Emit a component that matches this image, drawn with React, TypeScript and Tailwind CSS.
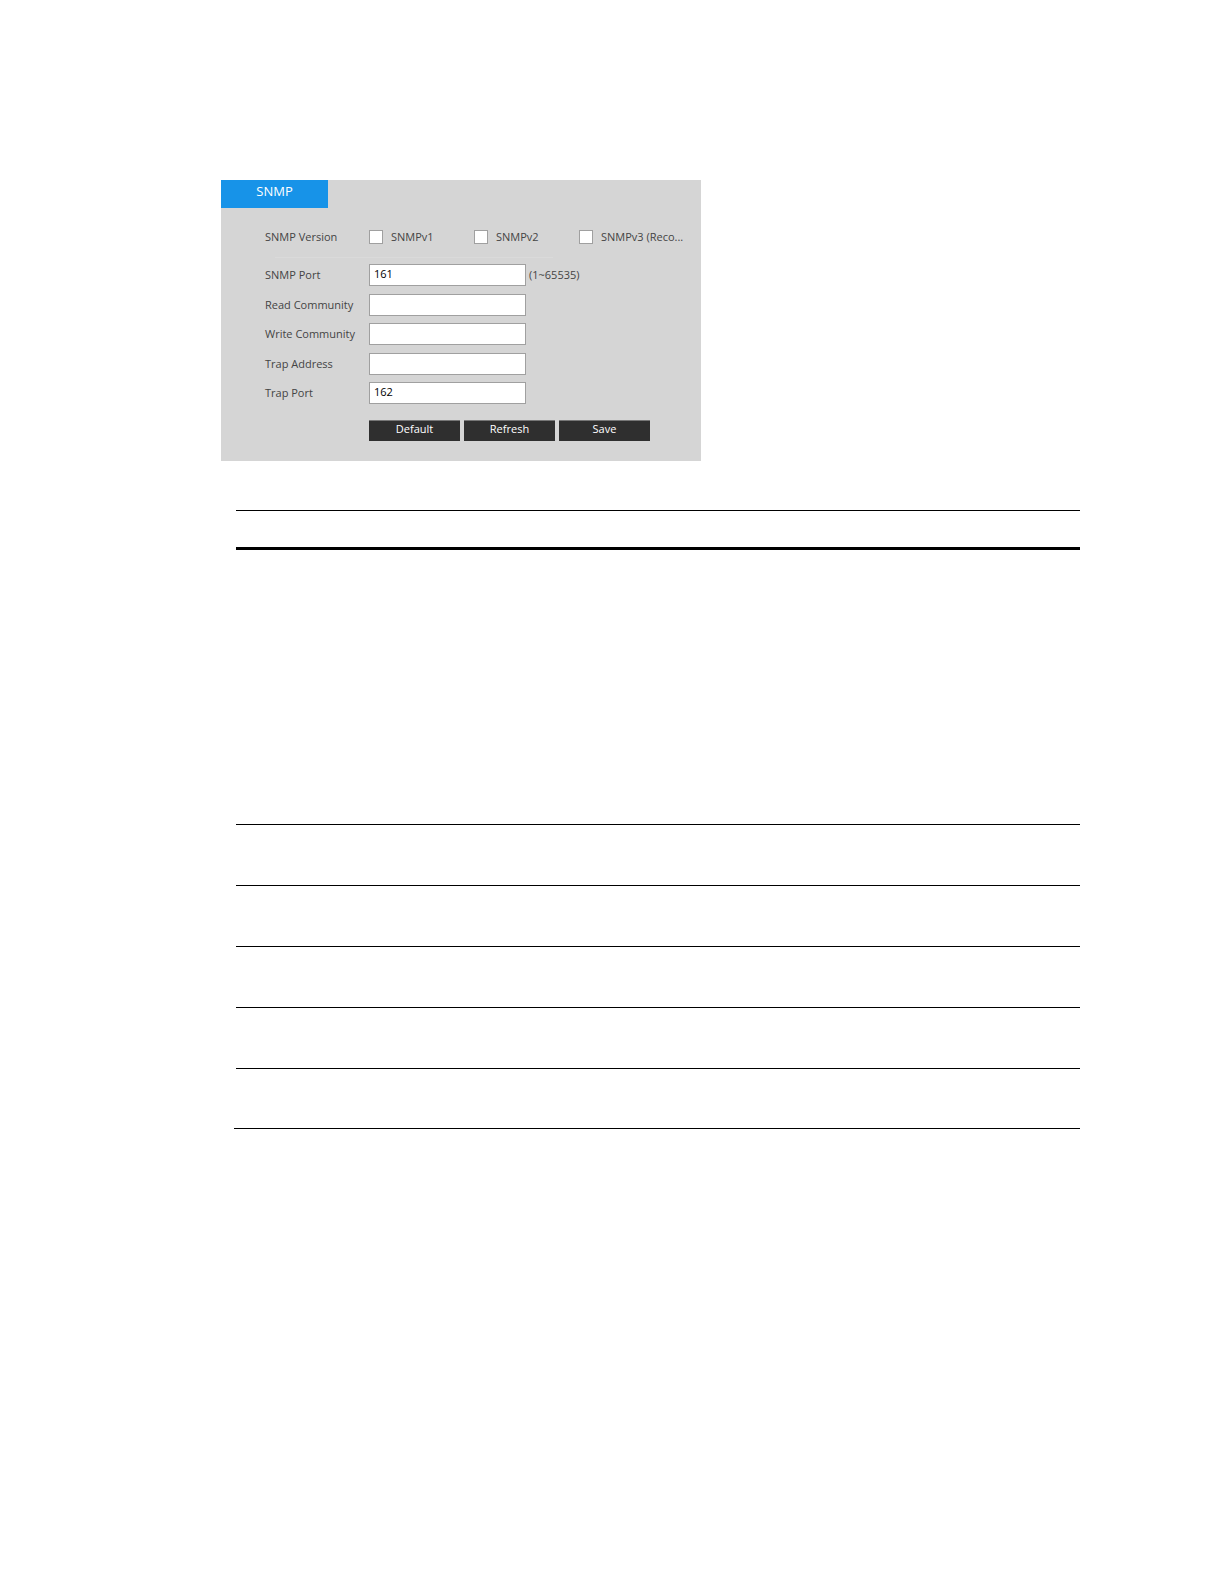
import { useState } from 'react';

const versions = [
  { id: 'v1', label: 'SNMPv1' },
  { id: 'v2', label: 'SNMPv2' },
  { id: 'v3', label: 'SNMPv3 (Reco...' },
];

const fields = [
  { id: 'snmpPort', label: 'SNMP Port', hint: '(1~65535)' },
  { id: 'readCommunity', label: 'Read Community' },
  { id: 'writeCommunity', label: 'Write Community' },
  { id: 'trapAddress', label: 'Trap Address' },
  { id: 'trapPort', label: 'Trap Port' },
];

const defaults: Record<string, string> = {
  snmpPort: '161',
  readCommunity: '',
  writeCommunity: '',
  trapAddress: '',
  trapPort: '162',
};

function SnmpPanel() {
  const [values, setValues] = useState(defaults);
  const [enabled, setEnabled] = useState<string[]>([]);

  const toggle = (id: string) => {
    setEnabled(enabled.includes(id) ? enabled.filter((v) => v !== id) : [...enabled, id]);
  };

  const reset = () => {
    setValues(defaults);
    setEnabled([]);
  };

  return (
    <form
      className="w-[480px] max-w-full bg-[#d5d5d5] pb-5 text-[11px] leading-[14px] text-[#444444]"
      onSubmit={(e) => e.preventDefault()}
    >
      <h2 className="h-7 w-[107px] bg-[#1793e8] pt-[3px] text-center text-[13px] leading-4 text-white">
        SNMP
      </h2>

      <div className="pl-11 pt-[22px]">
        <div role="group" aria-labelledby="version-label" className="flex items-center">
          <span id="version-label" className="w-[104px] shrink-0">SNMP Version</span>
          {versions.map((version) => (
            <label key={version.id} className="flex w-[105px] shrink-0 items-center gap-2 whitespace-nowrap">
              <input
                type="checkbox"
                className="size-[14px] shrink-0 appearance-none border border-[#a0a0a0] bg-white checked:bg-[#1793e8]"
                checked={enabled.includes(version.id)}
                onChange={() => toggle(version.id)}
              />
              {version.label}
            </label>
          ))}
        </div>

        <hr className="ml-[10px] mt-[13px] w-[278px] border-[#dadada]" />

        <div className="mt-[6px] flex h-[140px] flex-col justify-between">
          {fields.map((field) => (
            <div key={field.id} className="flex items-center">
              <label htmlFor={field.id} className="w-[104px] shrink-0">
                {field.label}
              </label>
              <input
                id={field.id}
                type="text"
                className="h-[22px] w-[157px] border border-[#a0a0a0] bg-white px-1 pb-[3px] text-black"
                value={values[field.id]}
                onChange={(e) => setValues({ ...values, [field.id]: e.target.value })}
              />
              {field.hint && <span className="ml-[3px]">{field.hint}</span>}
            </div>
          ))}
        </div>

        <div className="ml-[104px] mt-4 flex gap-1">
          <button type="button" className="h-[21px] w-[91px] border-t border-[#777777] bg-[#2f2f2f] pb-1 font-medium text-white" onClick={reset}>
            Default
          </button>
          <button type="button" className="h-[21px] w-[91px] border-t border-[#777777] bg-[#2f2f2f] pb-1 font-medium text-white">
            Refresh
          </button>
          <button type="submit" className="h-[21px] w-[91px] border-t border-[#777777] bg-[#2f2f2f] pb-1 font-medium text-white">
            Save
          </button>
        </div>
      </div>
    </form>
  );
}

// Ruled sheet: header band, one tall row, then five short ones
function RuledSheet() {
  return (
    <div className="ml-[13px] mt-[49px] border-b border-black">
      <div className="ml-[2px]">
        <div className="h-10 border-b-[3px] border-t border-black" />
        <div className="h-[275px] border-b border-black" />
        <div className="h-[61px] border-b border-black" />
        <div className="h-[61px] border-b border-black" />
        <div className="h-[61px] border-b border-black" />
        <div className="h-[61px] border-b border-black" />
        <div className="h-[59px]" />
      </div>
    </div>
  );
}

export default function App() {
  return (
    <main className="min-h-screen bg-white pb-12 pl-[221px] pr-36 pt-[180px] font-['Open_Sans',sans-serif]">
      <SnmpPanel />
      <RuledSheet />
    </main>
  );
}
